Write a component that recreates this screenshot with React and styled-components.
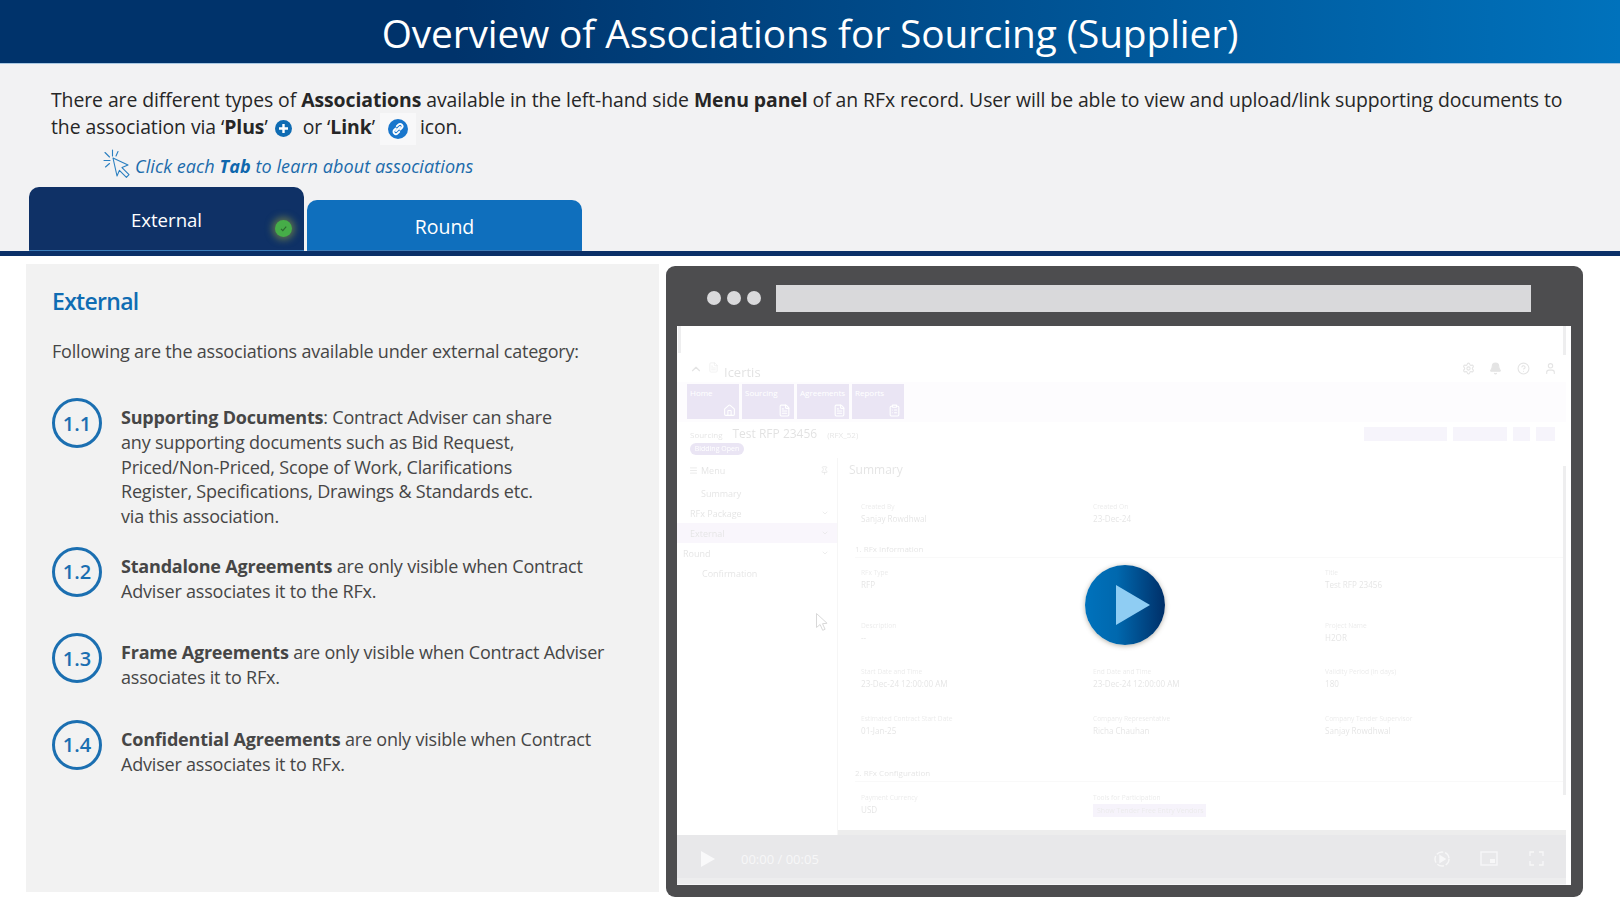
import styled, { createGlobalStyle } from "styled-components";
import { Home, FileText, ClipboardList, ChevronUp, ChevronDown, Bell, Settings, HelpCircle, User, Menu, Pin } from "lucide-react";

const GlobalStyles = createGlobalStyle`
  html, body { margin: 0; padding: 0; background: #fff; }
  * { box-sizing: border-box; }
  body { font-family: "Open Sans", "Noto Sans", sans-serif; }
`;

const Page = styled.div`
  width: 1620px;
  height: 912px;
  overflow: hidden;
  background: #fff;
`;

const Header = styled.header`
  height: 64px;
  display: flex;
  align-items: center;
  justify-content: center;
  background: linear-gradient(90deg, #00336b 0%, #00336b 28%, #0072bc 100%);
  border-bottom: 1px solid #a9c8e2;
`;

const Title = styled.h1`
  margin: 0 0 -2px;
  font-size: 38.8px;
  font-weight: 400;
  color: #fff;
  letter-spacing: -0.1px;
`;

const Top = styled.section`
  height: 192px;
  background: #f2f2f3;
  border-bottom: 5px solid #0b3068;
  display: flex;
  flex-direction: column;
`;

const Intro = styled.p`
  margin: 0;
  padding: 22px 0 0 51px;
  font-size: 19.4px;
  line-height: 27px;
  letter-spacing: -0.07px;
  color: #262626;
  white-space: nowrap;
  b { font-weight: 700; }
`;

const PlusIcon = styled.svg`
  vertical-align: -3px;
  margin: 0 11px 0 7px;
`;

const LinkChip = styled.span`
  display: inline-flex;
  align-items: center;
  justify-content: center;
  width: 36px;
  height: 32px;
  margin: -4px 4px -4px 5px;
  background: #f8f8f9;
  vertical-align: middle;
`;

const Hint = styled.div`
  display: flex;
  align-items: flex-end;
  gap: 4px;
  margin: 7px 0 0 103px;
  height: 31px;
  font-size: 18px;
  font-style: italic;
  color: #1b6bab;
  letter-spacing: 0.08px;
  b { font-weight: 700; color: #0f67ad; }
  span { line-height: 26px; }
`;

const Tabs = styled.div`
  display: flex;
  align-items: flex-end;
  gap: 3px;
  margin: auto 0 0 29px;
`;

const Tab = styled.div`
  position: relative;
  width: 275px;
  height: ${(p) => (p.$active ? 64 : 51)}px;
  padding-top: ${(p) => (p.$active ? 20 : 14)}px;
  border-radius: 10px 10px 0 0;
  background: ${(p) => (p.$active ? "#0f3166" : "#0f6fbd")};
  color: #fff;
  font-size: ${(p) => (p.$active ? 18.6 : 19.5)}px;
  line-height: 26px;
  text-align: center;
  border-bottom: 1px solid #3c7cb8;
`;

const DoneBadge = styled.span`
  position: absolute;
  right: 12px;
  bottom: 13px;
  width: 17px;
  height: 17px;
  border-radius: 50%;
  background: #46ad48;
  box-shadow: 0 0 7px 3px rgba(150, 160, 60, 0.55);
  display: flex;
  align-items: center;
  justify-content: center;
`;

const Body = styled.main`
  display: flex;
  align-items: flex-start;
  gap: 7px;
  padding: 8px 0 0 26px;
`;

const Panel = styled.section`
  width: 633px;
  height: 628px;
  padding: 22px 0 0 26px;
  background: #f2f2f2;
  color: #464646;
`;

const PanelTitle = styled.h2`
  margin: 0;
  font-size: 23px;
  line-height: 30px;
  font-weight: 600;
  color: #0f6cb3;
  letter-spacing: -0.7px;
`;

const Lead = styled.p`
  margin: 22px 0 34px;
  font-size: 18px;
  line-height: 26px;
  letter-spacing: -0.2px;
`;

const Item = styled.div`
  display: flex;
  gap: 19px;
  min-height: 86.5px;
  padding-bottom: 18px;
`;

const Num = styled.div`
  flex: none;
  width: 50px;
  height: 50px;
  border: 3px solid #1b6fb1;
  border-radius: 50%;
  display: flex;
  align-items: center;
  justify-content: center;
  color: #1b6fb1;
  font-size: 20px;
  font-weight: 600;
`;

const ItemText = styled.p`
  margin: 7px 0 0;
  font-size: 18px;
  line-height: 24.8px;
  letter-spacing: -0.2px;
  white-space: nowrap;
  b { font-weight: 700; }
`;

const Frame = styled.section`
  width: 917px;
  height: 631px;
  margin-top: 2px;
  padding: 0 12px 12px 11px;
  border-radius: 9px;
  background: #4d4d4f;
  display: flex;
  flex-direction: column;
`;

const Chrome = styled.div`
  flex: none;
  height: 60px;
  display: flex;
  align-items: center;
  padding-top: 4px;
`;

const Dot = styled.span`
  width: 14px;
  height: 14px;
  margin-left: ${(p) => (p.$first ? 30 : 6)}px;
  border-radius: 50%;
  background: #d9d9db;
`;

const UrlBar = styled.div`
  width: 755px;
  height: 27px;
  margin-left: 15px;
  background: #d9d9db;
`;

const Screen = styled.div`
  position: relative;
  flex: 1;
  display: flex;
  flex-direction: column;
  background: #fff;
  overflow: hidden;
`;

const Faded = styled.div`
  flex: none;
  height: 509px;
  padding-right: 5px;
  opacity: 0.13;
  filter: blur(0.5px);
  display: flex;
  flex-direction: column;
  overflow: hidden;
  color: #333;
  font-size: 9px;
`;

const AppTop = styled.div`
  flex: none;
  height: 56px;
  padding: 36px 9px 0 12px;
  display: flex;
  align-items: flex-start;
  gap: 5px;
`;

const Brand = styled.span`
  font-size: 13px;
  line-height: 20px;
  margin-right: auto;
  color: #222;
`;

const AppIcons = styled.div`
  display: flex;
  gap: 14.3px;
  svg { display: block; }
`;

const NavBand = styled.div`
  flex: none;
  height: 40px;
  padding: 2px 10px;
  display: flex;
  gap: 3px;
  background: #ece6f4;
`;

const NavTile = styled.div`
  position: relative;
  width: 52px;
  height: 35px;
  padding: 3px;
  background: #5b3aa8;
  color: #fff;
  font-size: 8px;
  svg { position: absolute; right: 3px; bottom: 2px; }
`;

const TitleRow = styled.div`
  flex: none;
  height: 36px;
  padding: 4px 11px 0 13px;
  display: flex;
  flex-direction: column;
  align-items: flex-start;
  font-size: 8px;
`;

const RecordLine = styled.div`
  align-self: stretch;
  height: 16px;
  display: flex;
  align-items: center;
  gap: 10px;
`;

const RecordName = styled.span`
  font-size: 12px;
  line-height: 16px;
  color: #222;
`;

const ActionButton = styled.span`
  width: ${(p) => p.$w}px;
  height: 14px;
  margin-left: ${(p) => (p.$first ? "auto" : "-4px")};
  background: #b7a6dc;
`;

const StatusPill = styled.span`
  width: 54px;
  height: 12px;
  margin-top: 1px;
  border-radius: 6px;
  background: #5b3aa8;
  color: #fff;
  font-size: 7px;
  line-height: 12px;
  text-align: center;
`;

const Split = styled.div`
  flex: 1;
  min-height: 0;
  display: flex;
`;

const Side = styled.aside`
  flex: none;
  width: 160px;
  padding-top: 2px;
`;

const SideRow = styled.div`
  height: 20px;
  margin-bottom: ${(p) => (p.$head ? 3 : 0)}px;
  padding: 0 8px 0 ${(p) => p.$indent}px;
  display: flex;
  align-items: center;
  gap: 3px;
  background: ${(p) => (p.$on ? "#cdb9e4" : "transparent")};
  font-size: 9px;
  svg:last-child { margin-left: auto; }
`;

const Content = styled.div`
  flex: 1;
  min-height: 0;
  display: flex;
  flex-direction: column;
  border-left: 1px solid #bbb;
`;

const ContentTitle = styled.div`
  height: 43px;
  padding: 2px 0 0 11px;
  font-size: 12px;
  line-height: 20px;
`;

const Fields = styled.div`
  flex: none;
  display: grid;
  grid-template-columns: repeat(3, 232px);
  grid-template-rows: ${(p) => p.$rows || "auto"};
  margin-bottom: ${(p) => p.$after || 0}px;
  padding-left: 23px;
`;

const Field = styled.div`
  font-size: 6.6px;
  line-height: 12px;
  color: #666;
  strong { display: block; font-weight: 400; font-size: 8.1px; color: #333; }
`;

const SectionHead = styled.div`
  flex: none;
  height: 18px;
  margin: 0 0 ${(p) => p.$after}px 17px;
  font-size: 8px;
  line-height: 18px;
  border-bottom: 1px solid #ccc;
`;

const Tag = styled.span`
  display: block;
  width: 113px;
  background: #b9a3e0;
  font-size: 7px;
  line-height: 13px;
  padding-left: 4px;
  white-space: nowrap;
`;

const HScroll = styled.div`
  flex: none;
  height: 5px;
  margin-top: auto;
  background: #777;
`;

const Controls = styled.div`
  flex: none;
  height: 50px;
  margin-right: 5px;
  padding: 0 22px 2px 23px;
  display: flex;
  align-items: center;
  background: #e8e8ea;
  border-bottom: 1px solid #f6f6f7;
  box-shadow: inset 0 -6px 0 #ededee;
  color: #f7f7f8;
`;

const Time = styled.span`
  margin: 0 auto 0 25px;
  font-size: 13px;
`;

const CtrlIcon = styled.svg`
  display: block;
  margin-left: ${(p) => p.$gap || 0}px;
`;

const ScrollTick = styled.span`
  position: absolute;
  ${(p) => (p.$left ? "left: 1px;" : "right: 5px;")}
  top: ${(p) => p.$top}px;
  width: 3px;
  height: ${(p) => p.$h}px;
  background: #eeeeef;
`;

const Cursor = styled.svg`
  position: absolute;
  left: 138px;
  top: 286px;
`;

const PlayButton = styled.div`
  position: absolute;
  left: 50%;
  top: 50%;
  width: 80px;
  height: 80px;
  margin: -41px 0 0 -39px;
  border-radius: 50%;
  background: linear-gradient(90deg, #0072bc 0%, #0068ae 40%, #002f68 100%);
  box-shadow: 0 1px 5px rgba(90, 80, 60, 0.45);
  display: flex;
  align-items: center;
  justify-content: center;
`;

const PlayGlyph = styled.svg`
  margin-left: 16px;
`;

const tabs = ["Home", "Sourcing", "Agreements", "Reports"];
const tileIcons = [Home, FileText, FileText, ClipboardList];

const items = [
  {
    num: "1.1",
    text: (
      <>
        <b>Supporting Documents</b>: Contract Adviser can share<br />
        any supporting documents such as Bid Request,<br />
        Priced/Non-Priced, Scope of Work, Clarifications<br />
        Register, Specifications, Drawings &amp; Standards etc.<br />
        via this association.
      </>
    ),
  },
  {
    num: "1.2",
    text: (
      <>
        <b>Standalone Agreements</b> are only visible when Contract<br />
        Adviser associates it to the RFx.
      </>
    ),
  },
  {
    num: "1.3",
    text: (
      <>
        <b>Frame Agreements</b> are only visible when Contract Adviser<br />
        associates it to RFx.
      </>
    ),
  },
  {
    num: "1.4",
    text: (
      <>
        <b>Confidential Agreements</b> are only visible when Contract<br />
        Adviser associates it to RFx.
      </>
    ),
  },
];

const MockApp = () => (
  <Faded>
    <AppTop>
      <ChevronUp size={14} />
      <FileText size={11} strokeWidth={1} />
      <Brand>Icertis</Brand>
      <AppIcons>
        <Settings size={13} />
        <Bell size={13} fill="#333" />
        <HelpCircle size={13} />
        <User size={13} />
      </AppIcons>
    </AppTop>
    <NavBand>
      {tabs.map((t, i) => {
        const Icon = tileIcons[i];
        return (
          <NavTile key={t}>
            {t}
            <Icon size={13} />
          </NavTile>
        );
      })}
    </NavBand>
    <TitleRow>
      <RecordLine>
        <span>Sourcing</span>
        <RecordName>Test RFP 23456</RecordName>
        <span>(RFX_52)</span>
        <ActionButton $first $w={83} />
        <ActionButton $w={54} />
        <ActionButton $w={17} />
        <ActionButton $w={19} />
      </RecordLine>
      <StatusPill>Bidding Open</StatusPill>
    </TitleRow>
    <Split>
      <Side>
        <SideRow $head $indent={12}><Menu size={9} /><span>Menu</span><Pin size={9} /></SideRow>
        <SideRow $indent={24}>Summary</SideRow>
        <SideRow $indent={13}>RFx Package<ChevronDown size={8} /></SideRow>
        <SideRow $indent={13} $on>External<ChevronDown size={8} /></SideRow>
        <SideRow $indent={6}>Round<ChevronDown size={8} /></SideRow>
        <SideRow $indent={25}>Confirmation</SideRow>
      </Side>
      <Content>
        <ContentTitle>Summary</ContentTitle>
        <Fields $after={15}>
          <Field>Created By<strong>Sanjay Rowdhwal</strong></Field>
          <Field>Created On<strong>23-Dec-24</strong></Field>
        </Fields>
        <SectionHead $after={9}>1. RFx Information</SectionHead>
        <Fields $rows="53px 46px 47px 47px" $after={4}>
          <Field>RFx Type<strong>RFP</strong></Field>
          <span />
          <Field>Title<strong>Test RFP 23456</strong></Field>
          <Field>Description<strong>--</strong></Field>
          <span />
          <Field>Project Name<strong>H2OR</strong></Field>
          <Field>Start Date and Time<strong>23-Dec-24 12:00:00 AM</strong></Field>
          <Field>End Date and Time<strong>23-Dec-24 12:00:00 AM</strong></Field>
          <Field>Validity Period (in days)<strong>180</strong></Field>
          <Field>Estimated Contract Start Date<strong>01-Jan-25</strong></Field>
          <Field>Company Representative<strong>Richa Chauhan</strong></Field>
          <Field>Company Tender Supervisor<strong>Sanjay Rowdhwal</strong></Field>
        </Fields>
        <SectionHead $after={10}>2. RFx Configuration</SectionHead>
        <Fields>
          <Field>Payment Currency<strong>USD</strong></Field>
          <Field>Tools for Participation<Tag>Show Tender Free Entry Vendors</Tag></Field>
        </Fields>
        <HScroll />
      </Content>
    </Split>
  </Faded>
);

const App = () => (
  <Page>
    <GlobalStyles />
    <Header>
      <Title>Overview of Associations for Sourcing (Supplier)</Title>
    </Header>
    <Top>
      <Intro>
        There are different types of <b>Associations</b> available in the left-hand side <b>Menu panel</b> of an RFx record. User will be able to view and upload/link supporting documents to<br />
        the association via ‘<b>Plus</b>’
        <PlusIcon width="17" height="17" viewBox="0 0 17 17">
          <circle cx="8.5" cy="8.5" r="8.5" fill="#0f6cb3" />
          <path d="M8.5 4v9M4 8.5h9" stroke="#fff" strokeWidth="2.4" />
        </PlusIcon>
        or ‘<b>Link</b>’
        <LinkChip>
          <svg width="20" height="20" viewBox="0 0 20 20">
            <circle cx="10" cy="10" r="10" fill="#1976cc" />
            <g fill="none" stroke="#fff" strokeWidth="1.9" strokeLinecap="round">
              <path d="M8.8 7.2l1.6-1.6a2.4 2.4 0 0 1 3.4 3.4l-1.6 1.6" />
              <path d="M11.2 12.8l-1.6 1.6a2.4 2.4 0 0 1-3.4-3.4l1.6-1.6" />
              <path d="M8 12l4-4" />
            </g>
          </svg>
        </LinkChip>
        icon.
      </Intro>
      <Hint>
        <svg width="28" height="30" viewBox="0 0 28 30" fill="none" stroke="#2a7fc0" strokeWidth="1.1" strokeLinecap="round">
          <path d="M10 9l15 7-6 2.6 7 7-2.6 2.8-7-7L14 27z" strokeLinejoin="round" />
          <path d="M9.5 1v6M2 3.5l4.5 4.5M1 11.5h6M2.5 18l4-3.5M15 2.5l-2 4.5" />
        </svg>
        <span>Click each <b>Tab</b> to learn about associations</span>
      </Hint>
      <Tabs>
        <Tab $active>
          External
          <DoneBadge>
            <svg width="9" height="9" viewBox="0 0 9 9">
              <path d="M2 4.8l1.8 1.8L7.2 2.6" fill="none" stroke="#2c6b30" strokeWidth="1.2" />
            </svg>
          </DoneBadge>
        </Tab>
        <Tab>Round</Tab>
      </Tabs>
    </Top>
    <Body>
      <Panel>
        <PanelTitle>External</PanelTitle>
        <Lead>Following are the associations available under external category:</Lead>
        {items.map((item) => (
          <Item key={item.num}>
            <Num>{item.num}</Num>
            <ItemText>{item.text}</ItemText>
          </Item>
        ))}
      </Panel>
      <Frame>
        <Chrome>
          <Dot $first />
          <Dot />
          <Dot />
          <UrlBar />
        </Chrome>
        <Screen>
          <MockApp />
          <Controls>
            <CtrlIcon width="16" height="18" viewBox="0 0 16 18"><path d="M1 1l14 8-14 8z" fill="#f9f9fa" /></CtrlIcon>
            <Time>00:00 / 00:05</Time>
            <CtrlIcon width="16" height="16" viewBox="0 0 16 16" fill="none" stroke="#f7f7f8" strokeWidth="1.4">
              <circle cx="8" cy="8" r="7" strokeDasharray="7 2" /><path d="M6 4.8l5 3.2-5 3.2z" fill="#f7f7f8" />
            </CtrlIcon>
            <CtrlIcon $gap={30} width="18" height="15" viewBox="0 0 18 15" fill="none" stroke="#f7f7f8" strokeWidth="1.4">
              <rect x="1" y="1" width="16" height="13" /><rect x="10" y="8" width="5" height="4" fill="#f7f7f8" stroke="none" />
            </CtrlIcon>
            <CtrlIcon $gap={31} width="15" height="15" viewBox="0 0 15 15" fill="none" stroke="#f7f7f8" strokeWidth="1.4">
              <path d="M1 5V1h4M10 1h4v4M14 10v4h-4M5 14H1v-4" />
            </CtrlIcon>
          </Controls>
          <ScrollTick $left $top={0} $h={27} />
          <ScrollTick $top={0} $h={29} />
          <ScrollTick $top={140} $h={329} />
          <Cursor width="14" height="20" viewBox="0 0 14 20">
            <path d="M1.5 1.5v14l3.6-3 2.6 5.8 2.4-1-2.6-5.6 4.6-.4z" fill="#fff" stroke="#d8d8d8" strokeWidth="1" />
          </Cursor>
          <PlayButton>
            <PlayGlyph width="34" height="40" viewBox="0 0 34 40">
              <path d="M0 0l34 20L0 40z" fill="#8fcdf3" />
            </PlayGlyph>
          </PlayButton>
        </Screen>
      </Frame>
    </Body>
  </Page>
);

export default App;
